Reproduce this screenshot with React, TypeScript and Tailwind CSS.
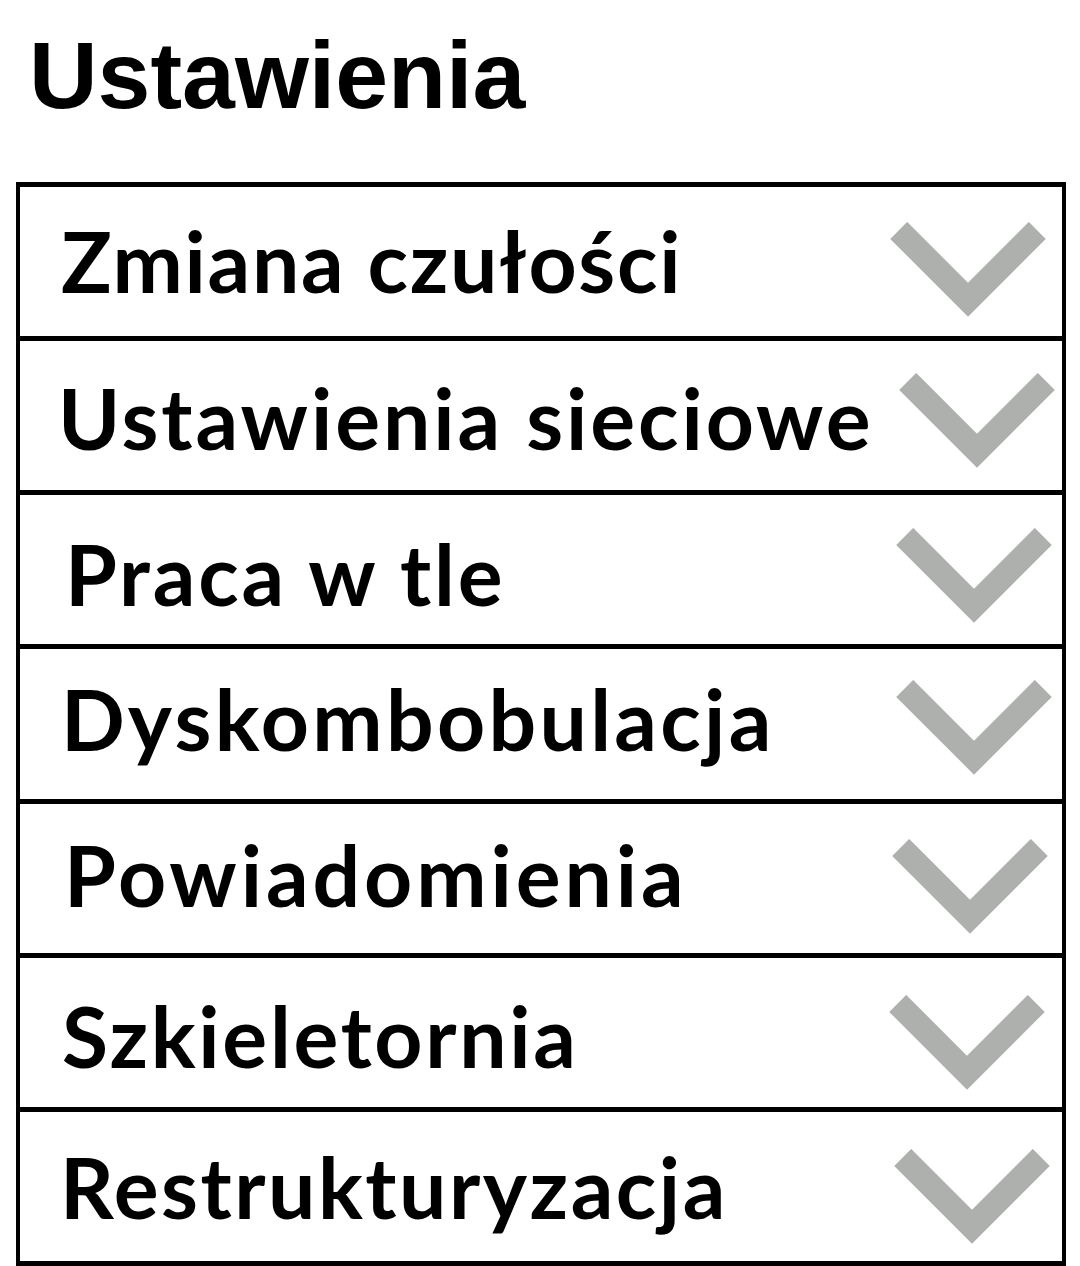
import React from "react";

type Row = {
  label: string;
  rowCls: string;
  textCls: string;
  chevCls: string;
};

const rows: Row[] = [
  { label: "Zmiana czułości", rowCls: "h-[149px]", textCls: "pl-[41px] pt-[32px] tracking-[1.7px]", chevCls: "mt-[35px] mr-[16px]" },
  { label: "Ustawienia sieciowe", rowCls: "h-[154px] border-t-[5px] border-black", textCls: "pl-[38px] pt-[35px] tracking-[2.9px]", chevCls: "mt-[32px] mr-[7px]" },
  { label: "Praca w tle", rowCls: "h-[154px] border-t-[5px] border-black", textCls: "pl-[45px] pt-[37px] tracking-[2.8px]", chevCls: "mt-[33px] mr-[10px]" },
  { label: "Dyskombobulacja", rowCls: "h-[155px] border-t-[5px] border-black", textCls: "pl-[41px] pt-[28px] tracking-[3.3px]", chevCls: "mt-[31px] mr-[10px]" },
  { label: "Powiadomienia", rowCls: "h-[154px] border-t-[5px] border-black", textCls: "pl-[44px] pt-[29px] tracking-[3.9px]", chevCls: "mt-[35px] mr-[14px]" },
  { label: "Szkieletornia", rowCls: "h-[154px] border-t-[5px] border-black", textCls: "pl-[42px] pt-[36px] tracking-[2.7px]", chevCls: "mt-[37px] mr-[17px]" },
  { label: "Restrukturyzacja", rowCls: "h-[154px] border-t-[5px] border-black", textCls: "pl-[40px] pt-[33px] tracking-[2.5px]", chevCls: "mt-[37px] mr-[12px]" },
];

function Chevron() {
  return (
    <svg width="156" height="95" viewBox="0 0 156 95" className="block">
      <polyline
        points="8.7,8.4 78,77.7 147.3,8.4"
        fill="none"
        stroke="#aeb0ae"
        strokeWidth="24"
        strokeLinecap="butt"
        strokeLinejoin="miter"
      />
    </svg>
  );
}

export default function App() {
  return (
    <div className="w-[1080px] h-[1266px] bg-white overflow-hidden">
      <div className="h-[182px] pt-[28px] pl-[29px]">
        <h1
          className="text-[95px] leading-none font-bold text-black"
          style={{ fontFamily: '"Liberation Sans", Arial, sans-serif' }}
        >
          Ustawienia
        </h1>
      </div>
      <div className="ml-[16px] w-[1050px] border-x-4 border-y-[5px] border-black">
        {rows.map((r) => (
          <div key={r.label} className={`flex items-start justify-between ${r.rowCls}`}>
            <div
              className={`text-[84px] leading-none font-bold text-black whitespace-nowrap ${r.textCls}`}
              style={{ fontFamily: 'Lato, "Open Sans", sans-serif' }}
            >
              {r.label}
            </div>
            <div className={r.chevCls}>
              <Chevron />
            </div>
          </div>
        ))}
      </div>
    </div>
  );
}
